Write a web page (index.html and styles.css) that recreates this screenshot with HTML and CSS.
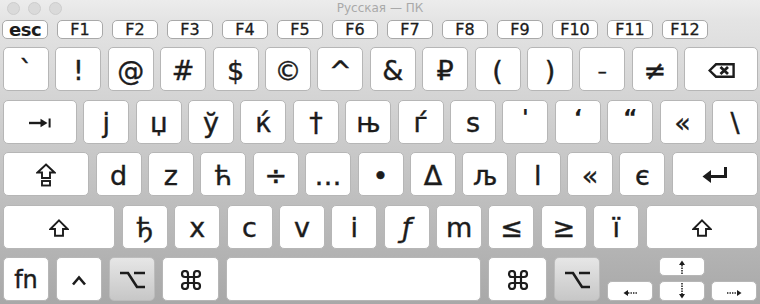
FILE: index.html
```html
<!DOCTYPE html>
<html lang="ru">
<head>
  <meta charset="UTF-8">
  <title>Русская — ПК</title>
  <link rel="stylesheet" href="styles.css">
</head>
<body>
  <div class="window">
    <div class="titlebar">
      <div class="lights"><span></span><span></span><span></span></div>
      <div class="title">Русская — ПК</div>
      <div></div>
    </div>

    <div class="keyboard">
      <div class="row frow">
        <div class="fkey esc">esc</div>
        <div class="fkey">F1</div>
        <div class="fkey">F2</div>
        <div class="fkey">F3</div>
        <div class="fkey">F4</div>
        <div class="fkey">F5</div>
        <div class="fkey">F6</div>
        <div class="fkey">F7</div>
        <div class="fkey">F8</div>
        <div class="fkey">F9</div>
        <div class="fkey">F10</div>
        <div class="fkey">F11</div>
        <div class="fkey">F12</div>
      </div>

      <div class="row">
        <div class="key">`</div>
        <div class="key">!</div>
        <div class="key">@</div>
        <div class="key">#</div>
        <div class="key">$</div>
        <div class="key">©</div>
        <div class="key">^</div>
        <div class="key">&amp;</div>
        <div class="key">₽</div>
        <div class="key">(</div>
        <div class="key">)</div>
        <div class="key small">–</div>
        <div class="key">≠</div>
        <div class="key wide">
          <svg width="27" height="15" viewBox="0 0 27 15"><path d="M1.6 7.5 L8 1.3 H25.6 V13.7 H8 Z" fill="none" stroke="#1c1c1c" stroke-width="2.4" stroke-linejoin="miter"/><path d="M12.5 4 L20 11 M20 4 L12.5 11" stroke="#1c1c1c" stroke-width="2.8"/></svg>
        </div>
      </div>

      <div class="row">
        <div class="key wide">
          <svg width="22" height="10" viewBox="0 0 22 10"><path d="M0 5 H13" stroke="#1c1c1c" stroke-width="2.4"/><path d="M18.5 5 L11.5 0.8 V9.2 Z" fill="#1c1c1c"/><rect x="19.6" y="0.5" width="2" height="9" fill="#1c1c1c"/></svg>
        </div>
        <div class="key">j</div>
        <div class="key">џ</div>
        <div class="key">ў</div>
        <div class="key">ќ</div>
        <div class="key">†</div>
        <div class="key">њ</div>
        <div class="key">ѓ</div>
        <div class="key">ѕ</div>
        <div class="key quote">'</div>
        <div class="key quote">‘</div>
        <div class="key quote">“</div>
        <div class="key">«</div>
        <div class="key">\</div>
      </div>

      <div class="row">
        <div class="key wide">
          <svg width="20" height="24" viewBox="0 0 20 24"><path d="M10 1.5 L18.5 9.5 H14 V15 H6 V9.5 H1.5 Z" fill="none" stroke="#1c1c1c" stroke-width="1.9" stroke-linejoin="miter"/><rect x="6" y="18" width="8" height="4.5" fill="none" stroke="#1c1c1c" stroke-width="1.9"/></svg>
        </div>
        <div class="key">d</div>
        <div class="key">z</div>
        <div class="key">ћ</div>
        <div class="key">÷</div>
        <div class="key">…</div>
        <div class="key">•</div>
        <div class="key">Δ</div>
        <div class="key">љ</div>
        <div class="key">l</div>
        <div class="key">«</div>
        <div class="key">є</div>
        <div class="key wide">
          <svg width="26" height="16" viewBox="0 0 26 16"><path d="M23.5 0 V9.5 H8" fill="none" stroke="#1c1c1c" stroke-width="3"/><path d="M0.5 9.5 L9 3 V16 Z" fill="#1c1c1c"/></svg>
        </div>
      </div>

      <div class="row">
        <div class="key wide">
          <svg width="20" height="18" viewBox="0 0 20 18"><path d="M10 1.4 L18.6 10 H14 V16.8 H6 V10 H1.4 Z" fill="none" stroke="#1c1c1c" stroke-width="1.9" stroke-linejoin="miter"/></svg>
        </div>
        <div class="key">ђ</div>
        <div class="key">x</div>
        <div class="key">c</div>
        <div class="key">v</div>
        <div class="key">i</div>
        <div class="key italic">ƒ</div>
        <div class="key">m</div>
        <div class="key">≤</div>
        <div class="key">≥</div>
        <div class="key">ї</div>
        <div class="key wide">
          <svg width="20" height="18" viewBox="0 0 20 18"><path d="M10 1.4 L18.6 10 H14 V16.8 H6 V10 H1.4 Z" fill="none" stroke="#1c1c1c" stroke-width="1.9" stroke-linejoin="miter"/></svg>
        </div>
      </div>

      <div class="row bottom">
        <div class="key mod fn">fn</div>
        <div class="key mod">
          <svg width="16" height="11" viewBox="0 0 16 11"><path d="M2 9.5 L8 2.5 L14 9.5" fill="none" stroke="#1c1c1c" stroke-width="2.6"/></svg>
        </div>
        <div class="key mod pressed">
          <svg width="25" height="18" viewBox="0 0 25 18"><path d="M0 2 H8 L17 16 H25 M14 2 H25" fill="none" stroke="#1c1c1c" stroke-width="2.6"/></svg>
        </div>
        <div class="key mod cmd">
          <svg width="22" height="20" viewBox="2 2 20 20"><path d="M15 6v12a3 3 0 1 0 3-3H6a3 3 0 1 0 3 3V6a3 3 0 1 0-3 3h12a3 3 0 1 0-3-3" fill="none" stroke="#1c1c1c" stroke-width="2.2"/></svg>
        </div>
        <div class="key space"></div>
        <div class="key mod cmd-r">
          <svg width="22" height="20" viewBox="2 2 20 20"><path d="M15 6v12a3 3 0 1 0 3-3H6a3 3 0 1 0 3 3V6a3 3 0 1 0-3 3h12a3 3 0 1 0-3-3" fill="none" stroke="#1c1c1c" stroke-width="2.2"/></svg>
        </div>
        <div class="key mod pressed">
          <svg width="25" height="18" viewBox="0 0 25 18"><path d="M0 2 H8 L17 16 H25 M14 2 H25" fill="none" stroke="#1c1c1c" stroke-width="2.6"/></svg>
        </div>
        <div class="arrows">
          <div class="key arrow up">
            <svg width="6" height="14" viewBox="0 0 6 14"><path d="M3 0.5 L6 5 H0 Z" fill="#1c1c1c"/><path d="M3 5 V14" stroke="#1c1c1c" stroke-width="1.5" stroke-dasharray="1.4 1.1"/></svg>
          </div>
          <div class="key arrow left">
            <svg width="15" height="6" viewBox="0 0 15 6"><path d="M0.5 3 L5 0 V6 Z" fill="#1c1c1c"/><path d="M5 3 H15" stroke="#1c1c1c" stroke-width="1.5" stroke-dasharray="1.4 1.1"/></svg>
          </div>
          <div class="key arrow down">
            <svg width="6" height="16" viewBox="0 0 6 16"><path d="M3 0 V11" stroke="#1c1c1c" stroke-width="1.5" stroke-dasharray="1.4 1.1"/><path d="M3 15.5 L6 11 H0 Z" fill="#1c1c1c"/></svg>
          </div>
          <div class="key arrow right">
            <svg width="15" height="6" viewBox="0 0 15 6"><path d="M0 3 H10" stroke="#1c1c1c" stroke-width="1.5" stroke-dasharray="1.4 1.1"/><path d="M14.5 3 L10 0 V6 Z" fill="#1c1c1c"/></svg>
          </div>
        </div>
      </div>
    </div>
  </div>
</body>
</html>
```

FILE: styles.css
```css
html, body {
  margin: 0;
  padding: 0;
}
body {
  width: 760px;
  height: 304px;
  overflow: hidden;
  font-family: "DejaVu Sans", sans-serif;
  background: linear-gradient(#ececec 0, #e4e4e4 20px, #c9c9c9 150px, #a8a8a8 100%);
}
.titlebar {
  height: 20px;
  display: grid;
  grid-template-columns: 1fr auto 1fr;
  align-items: start;
}
.lights {
  display: flex;
  gap: 8px;
  padding: 2px 0 0 7px;
}
.lights span {
  width: 11px;
  height: 11px;
  border-radius: 50%;
  background: #dadada;
  border: 1px solid #cdcdcd;
}
.title {
  font-size: 12px;
  color: #a9a9a9;
  padding-top: 1px;
}
.keyboard {
  padding: 0 2px 0 3px;
  display: flex;
  flex-direction: column;
  gap: 8.5px;
}
.row {
  display: flex;
  gap: 6.4px;
  height: 44px;
}
.frow {
  height: 19px;
  gap: 9px;
  margin-left: -1px;
  margin-bottom: -0.5px;
}
.fkey {
  box-sizing: border-box;
  width: 46px;
  background: #fff;
  border: 1px solid #a9a9a9;
  border-radius: 5px;
  display: flex;
  align-items: center;
  justify-content: center;
  font-size: 16px;
  color: #1c1c1c;
  -webkit-text-stroke: 0.3px #1c1c1c;
}
.fkey.esc {
  font-weight: bold;
  font-size: 18px;
  letter-spacing: -0.5px;
  -webkit-text-stroke: 0;
}
.key {
  box-sizing: border-box;
  width: 46px;
  flex: none;
  background: #fff;
  border: 1px solid #b6b6b6;
  border-radius: 5px;
  display: flex;
  align-items: center;
  justify-content: center;
  padding-top: 2px;
  font-size: 27px;
  color: #1c1c1c;
  -webkit-text-stroke: 0.4px #1c1c1c;
}
.key.wide {
  flex: 1;
}
.key.small {
  font-size: 18px;
}
.key.italic {
  font-style: italic;
}
.key.quote {
  align-items: flex-start;
  padding-top: 4px;
  font-weight: bold;
  font-size: 22px;
  -webkit-text-stroke: 0;
}
.bottom {
  gap: 7px;
}
.key.fn {
  font-size: 24px;
}
.key.cmd {
  width: 57px;
}
.key.space {
  width: 255px;
}
.key.cmd-r {
  width: 59px;
}
.key.pressed {
  background: linear-gradient(#e6e6e6, #c7c7c7);
  border-color: #bcbcbc;
}
.arrows {
  width: 151px;
  display: grid;
  grid-template-columns: 46px 46px 46px;
  grid-template-rows: 19px 20px;
  column-gap: 6px;
  row-gap: 5px;
}
.key.arrow {
  width: auto;
  padding-top: 0;
}
.arrow.up {
  grid-column: 2;
  grid-row: 1;
}
.arrow.left {
  grid-column: 1;
  grid-row: 2;
  padding-top: 3px;
}
.arrow.down {
  grid-column: 2;
  grid-row: 2;
}
.arrow.right {
  grid-column: 3;
  grid-row: 2;
  padding-top: 3px;
}
```
